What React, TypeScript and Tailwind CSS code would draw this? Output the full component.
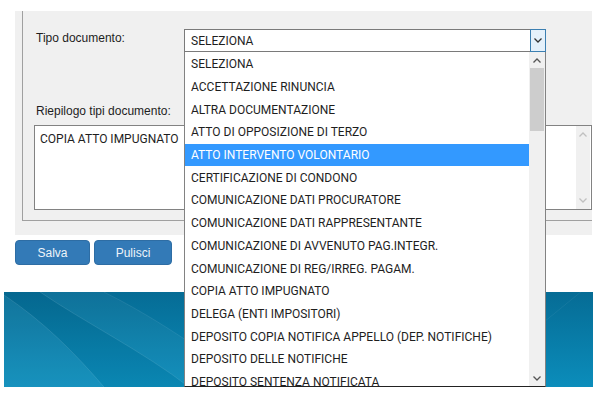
import React from "react";

const items = [
  "SELEZIONA",
  "ACCETTAZIONE RINUNCIA",
  "ALTRA DOCUMENTAZIONE",
  "ATTO DI OPPOSIZIONE DI TERZO",
  "ATTO INTERVENTO VOLONTARIO",
  "CERTIFICAZIONE DI CONDONO",
  "COMUNICAZIONE DATI PROCURATORE",
  "COMUNICAZIONE DATI RAPPRESENTANTE",
  "COMUNICAZIONE DI AVVENUTO PAG.INTEGR.",
  "COMUNICAZIONE DI REG/IRREG. PAGAM.",
  "COPIA ATTO IMPUGNATO",
  "DELEGA (ENTI IMPOSITORI)",
  "DEPOSITO COPIA NOTIFICA APPELLO (DEP. NOTIFICHE)",
  "DEPOSITO DELLE NOTIFICHE",
  "DEPOSITO SENTENZA NOTIFICATA",
];

function Chevron({ up = false, color = "#333" }: { up?: boolean; color?: string }) {
  return (
    <svg width="8" height="5" viewBox="0 0 8 5">
      <polyline
        points={up ? "0.5,4.5 4,1 7.5,4.5" : "0.5,0.5 4,4 7.5,0.5"}
        fill="none"
        stroke={color}
        strokeWidth="1.3"
      />
    </svg>
  );
}

export default function App() {
  return (
    <div
      className="relative w-[597px] h-[396px] overflow-hidden bg-white text-[#1e1e1e]"
      style={{ fontFamily: '"Liberation Sans", Arial, sans-serif' }}
    >
      {/* panel */}
      <div className="pt-[11px] pl-[15px] pr-[5px]">
        <div className="h-[224px] bg-[#f0f0f0] pl-[7px] overflow-hidden">
          <div className="h-[210px] border-l border-b border-[#a0a0a0] pl-[11px]">
            <div className="flex pt-[18px]">
              <div className="w-[150px] pl-[2px] pt-[1px] text-[12px] leading-[16px]">Tipo documento:</div>
              <div className="w-[362px] h-[23px] border border-[#7a7a7a] bg-white flex items-center">
                <div className="flex-1 pl-[6px] text-[12px] font-['Roboto',sans-serif]">SELEZIONA</div>
                <div className="w-[16px] h-[23px] -mr-px border border-[#3c7fb1] bg-[#e5f1fb] flex items-center justify-center">
                  <Chevron />
                </div>
              </div>
            </div>
            <div className="pt-[51px] pl-[2px] text-[12px] leading-[16px]">Riepilogo tipi documento:</div>
            <div className="mt-[6px] h-[85px] border border-[#828282] bg-white flex">
              <div className="flex-1 pl-[5px] pt-[4px] text-[12px] font-['Roboto',sans-serif]">COPIA ATTO IMPUGNATO</div>
              <div className="w-[14px] mr-px bg-[#f0f0f0] flex flex-col items-center justify-between py-[6px]">
                <Chevron up color="#c0c0c0" />
                <Chevron color="#c0c0c0" />
              </div>
            </div>
          </div>
        </div>
      </div>

      {/* buttons */}
      <div className="flex gap-[4px] pl-[15px] mt-[5px]">
        <button className="w-[75px] h-[25px] rounded-[4px] bg-[#337ab7] border border-[#2e6da4] text-[#eef4fa] text-[12px]">
          Salva
        </button>
        <button className="w-[78px] h-[25px] rounded-[4px] bg-[#337ab7] border border-[#2e6da4] text-[#eef4fa] text-[12px]">
          Pulisci
        </button>
      </div>

      {/* banner */}
      <div className="mt-[27px] ml-[4px] w-[589px] h-[95px] bg-gradient-to-b from-[#066c95] to-[#0b8dbb] relative overflow-hidden">
        <svg className="absolute inset-0" width="589" height="95" viewBox="0 0 589 95">
          <path d="M0,3 C40,30 70,60 100,95 L0,95 Z" fill="#ffffff" opacity="0.05" />
          <path d="M36,0 C80,30 140,60 185,95 L100,95 C70,60 40,30 0,3 L0,0 Z" fill="#000000" opacity="0.04" />
          <path d="M100,0 C140,20 170,40 200,60 L200,95 L185,95 C140,60 80,30 36,0 Z" fill="#ffffff" opacity="0.04" />
          <path d="M0,3 C40,30 70,60 100,95" fill="none" stroke="#ffffff" strokeOpacity="0.1" strokeWidth="1" />
          <path d="M36,0 C80,30 140,60 185,95" fill="none" stroke="#ffffff" strokeOpacity="0.1" strokeWidth="1" />
          <path d="M100,0 C140,20 170,40 200,60" fill="none" stroke="#ffffff" strokeOpacity="0.08" strokeWidth="1" />
          <path d="M540,30 L589,-10" fill="none" stroke="#ffffff" strokeOpacity="0.06" strokeWidth="1" />
        </svg>
      </div>

      {/* dropdown list overlay */}
      <div
        className="absolute left-[184px] top-[52px] w-[362px] h-[335px] bg-white border-l border-r border-[#828282] border-b border-b-[#222] flex overflow-hidden"
        style={{ fontFamily: 'Roboto, "Liberation Sans", sans-serif' }}
      >
        <div className="flex-1 pt-px overflow-hidden">
          {items.map((it, i) => (
            <div
              key={it}
              className={
                i === 4
                  ? "h-[22.7px] flex items-center pl-[6px] text-[12px] whitespace-nowrap bg-[#3399ff] text-white"
                  : "h-[22.7px] flex items-center pl-[6px] text-[12px] whitespace-nowrap text-[#1e1e1e]"
              }
            >
              {it}
            </div>
          ))}
        </div>
        <div className="w-[16px] bg-[#f0f0f0] flex flex-col">
          <div className="h-[16px] flex items-center justify-center">
            <Chevron up color="#555" />
          </div>
          <div className="mx-px h-[63px] bg-[#cdcdcd]" />
          <div className="flex-1" />
          <div className="h-[16px] flex items-center justify-center">
            <Chevron color="#555" />
          </div>
        </div>
      </div>
    </div>
  );
}
